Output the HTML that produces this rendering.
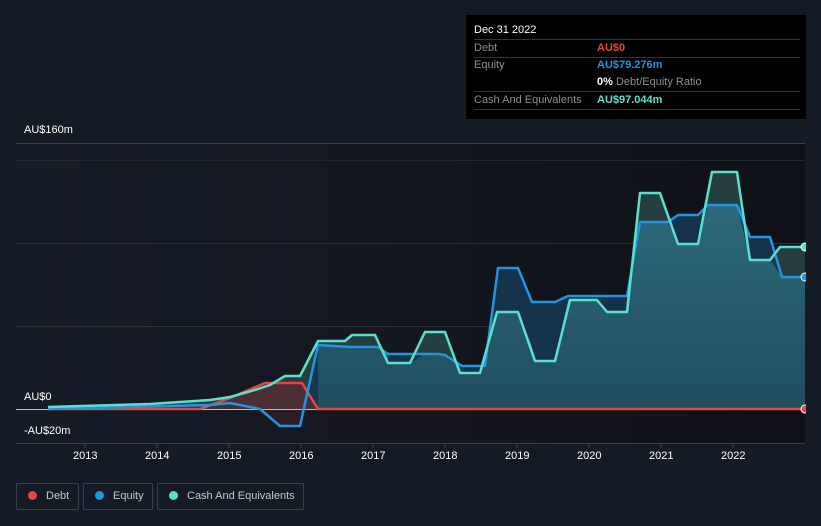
<!DOCTYPE html>
<html><head><meta charset="utf-8"><style>
html,body{margin:0;width:821px;height:526px;overflow:hidden}
body{background:#151b25;font-family:"Liberation Sans",sans-serif;position:relative}
.t{position:absolute;color:#fff;font-size:11px;white-space:nowrap}
.tip{position:absolute;left:466px;top:15px;width:340px;height:104px;background:#000;}
.tip .row{position:absolute;left:8px;width:326px;border-bottom:1px solid #333;height:17px;font-size:11px;color:#8a8f98;white-space:nowrap}
.leg{position:absolute;top:483px;height:27px;border:1px solid #3a404a;border-radius:2px;color:#c4c8ce;font-size:11px;line-height:25px;box-sizing:border-box;white-space:nowrap}
.leg i{display:inline-block;width:9px;height:9px;border-radius:50%;margin:0 9px 0 11px;vertical-align:-1px}
</style></head><body>
<svg width="821" height="526" style="position:absolute;left:0;top:0">
<defs>
<linearGradient id="bg" x1="0" x2="1" y1="0" y2="0"><stop offset="0" stop-color="#161c27"/><stop offset="1" stop-color="#0e1117"/></linearGradient>
<linearGradient id="cf" x1="0" x2="0" y1="0" y2="1"><stop offset="0" stop-color="#3a8c98" stop-opacity=".6"/><stop offset="1" stop-color="#2a6470" stop-opacity=".5"/></linearGradient>
</defs>
<rect x="16" y="143" width="789" height="300" fill="url(#bg)"/>
<g stroke="#3a3f48" stroke-width="1">
<line x1="16" x2="805" y1="143.5" y2="143.5"/>
<line x1="16" x2="805" y1="160.5" y2="160.5" stroke="#23272e"/>
<line x1="16" x2="805" y1="243.5" y2="243.5" stroke="#2a2f38"/>
<line x1="16" x2="805" y1="326.5" y2="326.5" stroke="#2a2f38"/>
<line x1="16" x2="805" y1="443.5" y2="443.5"/>
</g>
<g stroke="#3a3f48"><line x1="85" x2="85" y1="443" y2="448"/><line x1="157" x2="157" y1="443" y2="448"/><line x1="229" x2="229" y1="443" y2="448"/><line x1="301" x2="301" y1="443" y2="448"/><line x1="373" x2="373" y1="443" y2="448"/><line x1="445" x2="445" y1="443" y2="448"/><line x1="517" x2="517" y1="443" y2="448"/><line x1="589" x2="589" y1="443" y2="448"/><line x1="661" x2="661" y1="443" y2="448"/><line x1="733" x2="733" y1="443" y2="448"/></g>
<path d="M48 407 L150 404 L210 400 L230 397 L255 390 L270 385 L285 376 L300 376 L318 341 L345 341 L352 335 L375 335 L388 363 L410 363 L425 332 L445 332 L460 373 L480 373 L497 312 L518 312 L535 361 L555 361 L570 300 L597 300 L607 312 L627 312 L640 193 L660 193 L678 244 L698 244 L712 172 L737 172 L750 260 L770 260 L780 247 L805 247 L805 409 L48 409Z" fill="#2a4a48" opacity=".8"/>
<path d="M48 409 L210 405 L230 403 L260 409 L280 426 L300 426 L318 345 L350 347 L378 347 L388 354 L438 354 L445 355 L462 366 L485 366 L498 268 L518 268 L532 302 L555 302 L568 296 L627 296 L640 222 L668 222 L678 215 L698 215 L708 205 L737 205 L750 237 L770 237 L782 277 L805 277 L805 409Z" fill="#163650" opacity=".9"/>
<path d="M260 409 L280 426 L300 426 L305 409Z" fill="#2a1c24"/>
<path d="M318 409 L318 345 L350 347 L378 347 L388 354 L388 363 L410 363 L425 354 L438 354 L445 355 L460 366 L460 373 L480 373 L485 366 L497 312 L518 312 L532 345 L535 361 L555 361 L568 300 L597 300 L607 312 L627 312 L640 222 L668 222 L678 244 L698 244 L708 205 L737 205 L750 260 L770 260 L782 277 L805 277 L805 409Z" fill="url(#cf)"/>
<path d="M200 409 L230 398 L265 383 L302 383 L318 409Z" fill="#5a2a30" opacity=".7"/>
<line x1="16" x2="805" y1="409.5" y2="409.5" stroke="#b9bcc2" stroke-width="1"/>
<path d="M48 409 L200 409 L230 398 L265 383 L302 383 L318 409 L805 409" fill="none" stroke="#e64545" stroke-width="2.5" stroke-linejoin="round"/>
<path d="M48 409 L210 405 L230 403 L260 409 L280 426 L300 426 L318 345 L350 347 L378 347 L388 354 L438 354 L445 355 L462 366 L485 366 L498 268 L518 268 L532 302 L555 302 L568 296 L627 296 L640 222 L668 222 L678 215 L698 215 L708 205 L737 205 L750 237 L770 237 L782 277 L805 277" fill="none" stroke="#2394df" stroke-width="2.5" stroke-linejoin="round"/>
<path d="M48 407 L150 404 L210 400 L230 397 L255 390 L270 385 L285 376 L300 376 L318 341 L345 341 L352 335 L375 335 L388 363 L410 363 L425 332 L445 332 L460 373 L480 373 L497 312 L518 312 L535 361 L555 361 L570 300 L597 300 L607 312 L627 312 L640 193 L660 193 L678 244 L698 244 L712 172 L737 172 L750 260 L770 260 L780 247 L805 247" fill="none" stroke="#5ce0cc" stroke-width="2.5" stroke-linejoin="round"/>
<circle cx="805" cy="247" r="4" fill="#5ce0cc" stroke="#fff" stroke-width="1"/>
<circle cx="805" cy="277" r="4" fill="#2394df" stroke="#fff" stroke-width="1"/>
<circle cx="805" cy="409" r="4" fill="#e64545" stroke="#fff" stroke-width="1"/>
<rect x="806" y="143" width="15" height="300" fill="#151b25"/>
</svg>
<div class="t" style="left:24px;top:124px">AU$160m</div>
<div class="t" style="left:24px;top:391px">AU$0</div>
<div class="t" style="left:24px;top:425px">-AU$20m</div>
<div class="t" style="left:73px;top:450px">2013</div>
<div class="t" style="left:145px;top:450px">2014</div>
<div class="t" style="left:217px;top:450px">2015</div>
<div class="t" style="left:289px;top:450px">2016</div>
<div class="t" style="left:361px;top:450px">2017</div>
<div class="t" style="left:433px;top:450px">2018</div>
<div class="t" style="left:505px;top:450px">2019</div>
<div class="t" style="left:577px;top:450px">2020</div>
<div class="t" style="left:649px;top:450px">2021</div>
<div class="t" style="left:721px;top:450px">2022</div>
<div class="tip">
<div style="position:absolute;left:8px;top:9px;color:#fff;font-size:11px">Dec 31 2022</div>
<div class="row" style="top:24px;border-top:1px solid #333;line-height:16px">Debt<span style="position:absolute;left:123px;color:#e64545;font-weight:bold">AU$0</span></div>
<div class="row" style="top:42px;line-height:16px;border-bottom:none">Equity<span style="position:absolute;left:123px;color:#2394df;font-weight:bold">AU$79.276m</span></div>
<div class="row" style="top:59px;line-height:16px"><span style="position:absolute;left:123px;color:#8a8f98"><b style="color:#fff">0%</b> Debt/Equity Ratio</span></div>
<div class="row" style="top:77px;line-height:16px">Cash And Equivalents<span style="position:absolute;left:123px;color:#5ce0cc;font-weight:bold">AU$97.044m</span></div>
</div>
<div class="leg" style="left:16px;width:63px"><i style="background:#e64545"></i>Debt</div>
<div class="leg" style="left:83px;width:70px"><i style="background:#2394df"></i>Equity</div>
<div class="leg" style="left:157px;width:147px"><i style="background:#5ce0cc"></i>Cash And Equivalents</div>
</body></html>
